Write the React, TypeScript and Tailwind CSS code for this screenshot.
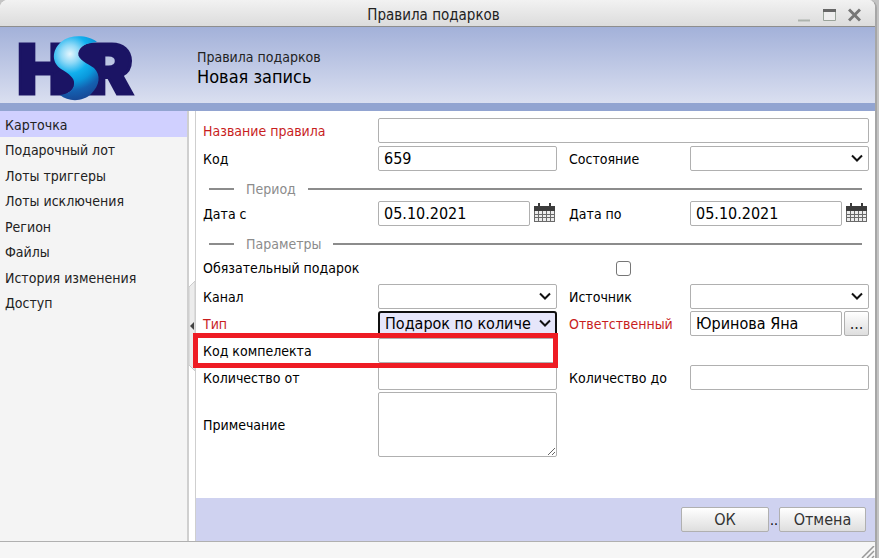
import React, { useState } from "react";

const menuItems = [
  "Карточка",
  "Подарочный лот",
  "Лоты триггеры",
  "Лоты исключения",
  "Регион",
  "Файлы",
  "История изменения",
  "Доступ",
];

const rowClass =
  "relative grid grid-cols-[175fr_179fr_133fr_179fr] items-center";
const fieldClass =
  "block w-full min-w-0 h-[25px] rounded-[2px] border border-[#b0b0b0] bg-white px-[5px] text-base leading-5 text-black outline-none";

function Logo() {
  return (
    <svg
      className="h-[72px] w-[126px] overflow-visible"
      viewBox="0 0 126 72"
      role="img"
      aria-label="HSR"
    >
      <defs>
        <radialGradient
          id="ball"
          gradientUnits="userSpaceOnUse"
          cx="56"
          cy="22"
          r="46"
        >
          <stop offset="0" stopColor="#e4f6fe" />
          <stop offset="0.2" stopColor="#8fd9f7" />
          <stop offset="0.42" stopColor="#12b0ee" />
          <stop offset="0.6" stopColor="#0a98dc" />
          <stop offset="0.8" stopColor="#1460b0" />
          <stop offset="1" stopColor="#174a98" />
        </radialGradient>
      </defs>
      <g
        fill="#1b1464"
        stroke="#1b1464"
        strokeWidth="3"
        fontFamily="Inter, sans-serif"
        fontWeight="900"
        fontSize="69"
      >
        <text x="3" y="62">
          H
        </text>
        <text x="73" y="62">
          R
        </text>
      </g>
      <circle cx="49" cy="50" r="12" fill="#1b1464" />
      <circle cx="77" cy="24" r="13" fill="#1b1464" />
      <path
        d="M83 10C74 3 57 2 47 10C37 19 38 31 47 37C55 42 61 46 60 52C60 58 54 62 46 63C54 70 69 70 77 62C86 53 87 43 80 36C73 31 64 28 64 21C65 14 73 11 83 10Z"
        fill="url(#ball)"
      />
    </svg>
  );
}

function CalendarIcon() {
  return (
    <svg className="h-5 w-[21px]" viewBox="0 0 21 20" aria-hidden="true">
      <path d="M0 3h21v5H0zM4 0h2v4H4zM15 0h2v4h-2z" fill="#3c3c3c" />
      <path d="M0 8h21v11H0z" fill="#6a6a6a" />
      <path
        d="M1 8h3v3H1zM5 8h3v3H5zM9 8h3v3H9zM13 8h3v3h-3zM17 8h3v3h-3zM1 12h3v2H1zM5 12h3v2H5zM9 12h3v2H9zM13 12h3v2h-3zM17 12h3v2h-3zM1 15h3v3H1zM5 15h3v3H5zM9 15h3v3H9zM13 15h3v3h-3zM17 15h3v3h-3z"
        fill="#ececec"
      />
    </svg>
  );
}

function Section({ title }: { title: string }) {
  return (
    <div className="flex items-center pl-1.5 pr-[7px] text-sm leading-5 text-[#8c8c8c]">
      <span className="h-0.5 w-[25px] bg-[#8c8c8c]" />
      <h2 className="px-3">{title}</h2>
      <span className="h-0.5 flex-1 bg-[#8c8c8c]" />
    </div>
  );
}

function Label({ id, text, required, second }: any) {
  return (
    <label
      htmlFor={id}
      className={`text-sm leading-5 whitespace-nowrap ${
        required ? "text-[#c81e1e]" : "text-black"
      } ${second ? "pl-3" : ""}`}
    >
      {text}
    </label>
  );
}

function SelectField({ id, options, active }: any) {
  return (
    <div className="relative min-w-0">
      <select
        id={id}
        className={`block h-[25px] w-full appearance-none pl-[5px] pr-6 text-base leading-5 text-black outline-none ${
          active
            ? "rounded-[3px] border-2 border-[#101010] bg-[#e6e6fa]"
            : "rounded-[2px] border border-[#b0b0b0] bg-white"
        }`}
      >
        {options.map((option: string) => (
          <option key={option}>{option}</option>
        ))}
      </select>
      <svg
        className="pointer-events-none absolute right-1.5 top-2 h-2 w-3"
        viewBox="0 0 12 8"
        aria-hidden="true"
      >
        <path d="M1 1.500l5 5 5-5" fill="none" stroke="#111" strokeWidth="2" />
      </svg>
    </div>
  );
}

function DateField({ id, value }: { id: string; value: string }) {
  return (
    <div className="flex min-w-0 items-center gap-1">
      <input id={id} defaultValue={value} className={fieldClass} />
      <button
        type="button"
        aria-label="Календарь"
        className="mb-0.5 mr-0.5 shrink-0"
      >
        <CalendarIcon />
      </button>
    </div>
  );
}

function App() {
  const [activeItem, setActiveItem] = useState("Карточка");

  return (
    <div className="flex min-h-screen bg-[#c4c4c4] pr-0.5 font-['DejaVu_Sans_Condensed','Noto_Sans',sans-serif]">
      <div className="flex min-w-0 flex-1 flex-col overflow-hidden rounded-t-lg border-r-2 border-[#a6a6a6] bg-white">
        {/* Title bar */}
        <div className="relative flex h-[27px] items-center justify-center border-b border-[#8e8e8e] bg-linear-to-b from-[#f2f2f2] to-[#dcdcdc]">
          <h1 className="pr-2 pt-1 text-[15px] leading-5 text-[#222]">
            Правила подарков
          </h1>
          <div className="absolute right-3.5 top-2 flex gap-3">
            <button type="button" aria-label="Свернуть">
              <svg className="h-3.5 w-[13px]" viewBox="0 0 13 14">
                <path d="M0 12.500h12" stroke="#adb3ad" strokeWidth="2" />
              </svg>
            </button>
            <button type="button" aria-label="Развернуть">
              <svg className="h-3.5 w-[13px]" viewBox="0 0 13 14">
                <path d="M.5 1.500h12v11H.5z" fill="#eee" stroke="#9aa39a" />
                <path d="M0 1h13v3H0z" fill="#666" />
              </svg>
            </button>
            <button type="button" aria-label="Закрыть">
              <svg className="h-3.5 w-[13px]" viewBox="0 0 13 14">
                <path
                  d="M1 1.500l11 11M12 1.500l-11 11"
                  stroke="#777"
                  strokeWidth="3"
                />
              </svg>
            </button>
          </div>
        </div>

        {/* Header */}
        <header className="flex h-[84px] items-start border-b-8 border-[#92a4d1] bg-linear-to-b from-[#a3b1d9] to-[#dadff0] pl-3.5 pt-[5px]">
          <Logo />
          <div className="pl-[57px] pt-[15px]">
            <p className="text-sm leading-5 text-[#222]">Правила подарков</p>
            <p className="text-lg leading-5 text-black">Новая запись</p>
          </div>
        </header>

        <div className="flex flex-1">
          <nav className="w-[189px] shrink-0 border-r-2 border-[#cfcfcf] bg-[#f4f4f4]">
            <div className="grid h-[204px] grid-rows-8">
              {menuItems.map((item) => (
                <button
                  key={item}
                  type="button"
                  onClick={() => setActiveItem(item)}
                  className={`flex w-full items-center pl-[5px] pt-0.5 text-left text-sm leading-5 text-[#222] ${
                    activeItem === item ? "bg-[#d0d0ff]" : ""
                  }`}
                >
                  {item}
                </button>
              ))}
            </div>
          </nav>

          {/* Splitter */}
          <div className="w-[7px] shrink-0 border-r border-[#cfcfcf] pt-[170px]">
            <svg className="h-[90px] w-1.5" viewBox="0 0 6 90">
              <path d="M0 6l6-6v90l-6-6z" fill="#ececec" stroke="#ccc" />
              <path d="M5 41v8L1 45z" fill="#444" />
            </svg>
          </div>

          <main className="flex min-w-0 flex-1 flex-col">
            <form className="flex-1 pb-8 pl-[7px] pr-1.5 pt-[7px]">
              <div className="flex flex-col gap-[3px]">
                <div className={rowClass}>
                  <Label id="name" text="Название правила" required />
                  <div className="col-span-3">
                    <input id="name" className={fieldClass} />
                  </div>
                </div>
                <div className={rowClass}>
                  <Label id="code" text="Код" />
                  <input id="code" defaultValue="659" className={fieldClass} />
                  <Label id="state" text="Состояние" second />
                  <SelectField id="state" options={[""]} />
                </div>
              </div>

              <div className="pb-0.5 pt-2">
                <Section title="Период" />
              </div>
              <div className={rowClass}>
                <Label id="from" text="Дата с" />
                <DateField id="from" value="05.10.2021" />
                <Label id="to" text="Дата по" second />
                <DateField id="to" value="05.10.2021" />
              </div>
              <div className="pb-1 pt-2">
                <Section title="Параметры" />
              </div>

              <div className="grid grid-cols-[175fr_491fr] items-center pb-1.5">
                <Label id="mandatory" text="Обязательный подарок" />
                <input
                  id="mandatory"
                  type="checkbox"
                  className="m-0 size-[15px] appearance-none justify-self-center rounded-[3px] border border-[#767676] bg-white checked:bg-[#5a6fb0]"
                />
              </div>

              <div className="flex flex-col gap-0.5">
                <div className={rowClass}>
                  <Label id="channel" text="Канал" />
                  <SelectField id="channel" options={[""]} />
                  <Label id="source" text="Источник" second />
                  <SelectField id="source" options={[""]} />
                </div>
                <div className={rowClass}>
                  <Label id="type" text="Тип" required />
                  <SelectField
                    id="type"
                    options={["Подарок по количеству"]}
                    active
                  />
                  <Label id="owner" text="Ответственный" required second />
                  <div className="flex min-w-0 gap-0.5">
                    <input
                      id="owner"
                      defaultValue="Юринова Яна"
                      className={fieldClass}
                    />
                    <button
                      type="button"
                      className="h-[25px] w-[25px] shrink-0 rounded-[2px] border border-[#b0b0b0] bg-linear-to-b from-white to-[#dedede] text-base leading-5 text-[#222]"
                    >
                      ...
                    </button>
                  </div>
                </div>
                <div className={rowClass}>
                  <Label id="kit" text="Код компелекта" />
                  <input id="kit" className={fieldClass} />
                  <div className="pointer-events-none absolute -inset-y-[5px] -left-2.5 -right-px z-10 col-start-1 col-end-3 border-5 border-[#ee1c24]" />
                </div>
                <div className={rowClass}>
                  <Label id="qty-from" text="Количество от" />
                  <input id="qty-from" className={fieldClass} />
                  <Label id="qty-to" text="Количество до" second />
                  <input id="qty-to" className={fieldClass} />
                </div>
                <div className={rowClass}>
                  <Label id="note" text="Примечание" />
                  <textarea
                    id="note"
                    className="block h-[65px] w-full rounded-[2px] border border-[#b0b0b0] bg-white px-[5px] text-base outline-none"
                  />
                </div>
              </div>
            </form>

            <footer className="flex h-[43px] items-center justify-end gap-px bg-[#cfd2f0] pr-[9px]">
              <button
                type="button"
                className="h-[25px] w-[88px] rounded-[2px] border border-[#b0b0b0] bg-linear-to-b from-white to-[#dedede] text-base leading-5 text-[#333]"
              >
                ОК
              </button>
              <span className="text-sm leading-5">..</span>
              <button
                type="button"
                className="h-[25px] w-[87px] rounded-[2px] border border-[#b0b0b0] bg-linear-to-b from-white to-[#dedede] text-base leading-5 text-[#333]"
              >
                Отмена
              </button>
            </footer>
          </main>
        </div>

        {/* Status bar */}
        <div className="flex h-[17px] items-end justify-end border-t border-[#b0b0b0] bg-[#f6f6f6]">
          <svg className="h-3 w-3.5" viewBox="0 0 14 12" aria-hidden="true">
            <path
              d="M1 12L13 0M6 12l7-7M11 12l2-2"
              fill="none"
              stroke="#999"
              strokeWidth="1.500"
            />
          </svg>
        </div>
      </div>
    </div>
  );
}

export default App;
